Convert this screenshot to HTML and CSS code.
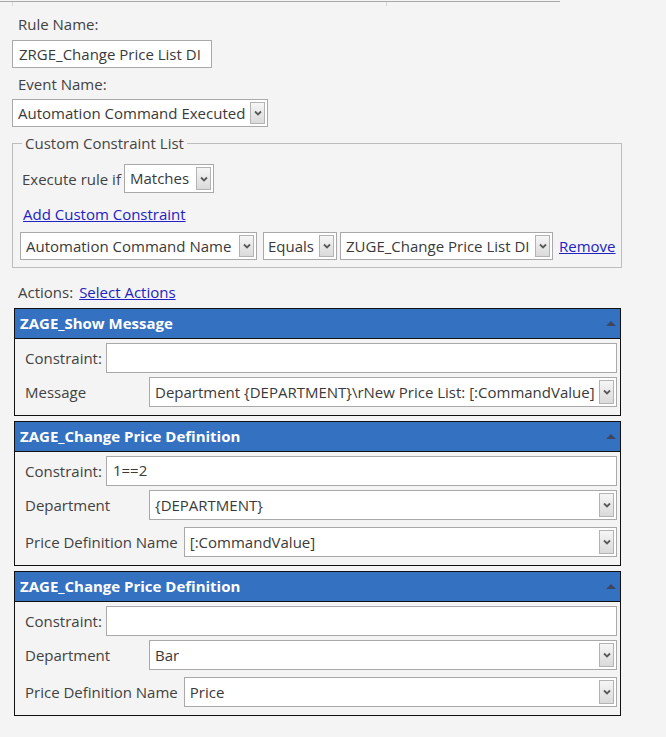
FILE: index.html
```html
<!DOCTYPE html>
<html>
<head>
<meta charset="utf-8">
<link rel="stylesheet" href="styles.css">
</head>
<body>
<div class="topline"><span class="tick t1"></span><span class="tick t2"></span></div>
<div class="form">
  <div class="label lbl-rule">Rule Name:</div>
  <div class="input input-rule">ZRGE_Change Price List DI</div>
  <div class="label lbl-event">Event Name:</div>
  <div class="select select-event"><span class="val">Automation Command Executed</span><span class="arrow"><svg width="8" height="6" viewBox="0 0 8 6"><path d="M1 1.5 L4 4.5 L7 1.5" fill="none" stroke="#5a5a5a" stroke-width="1.8"/></svg></span></div>

  <fieldset class="ccl">
    <legend>Custom Constraint List</legend>
    <div class="exec-row">
      <span class="exec-label">Execute rule if</span>
      <div class="select select-match"><span class="val">Matches</span><span class="arrow"><svg width="8" height="6" viewBox="0 0 8 6"><path d="M1 1.5 L4 4.5 L7 1.5" fill="none" stroke="#5a5a5a" stroke-width="1.8"/></svg></span></div>
    </div>
    <a class="link add-link">Add Custom Constraint</a>
    <div class="cons-row">
      <div class="select sel-name"><span class="val">Automation Command Name</span><span class="arrow"><svg width="8" height="6" viewBox="0 0 8 6"><path d="M1 1.5 L4 4.5 L7 1.5" fill="none" stroke="#5a5a5a" stroke-width="1.8"/></svg></span></div>
      <div class="select sel-op"><span class="val">Equals</span><span class="arrow"><svg width="8" height="6" viewBox="0 0 8 6"><path d="M1 1.5 L4 4.5 L7 1.5" fill="none" stroke="#5a5a5a" stroke-width="1.8"/></svg></span></div>
      <div class="select sel-value"><span class="val">ZUGE_Change Price List DI</span><span class="arrow"><svg width="8" height="6" viewBox="0 0 8 6"><path d="M1 1.5 L4 4.5 L7 1.5" fill="none" stroke="#5a5a5a" stroke-width="1.8"/></svg></span></div>
      <a class="link remove-link">Remove</a>
    </div>
  </fieldset>

  <div class="actions-line"><span class="label-inline">Actions:</span><a class="link">Select Actions</a></div>

  <div class="panel">
    <div class="panel-head"><span>ZAGE_Show Message</span><span class="tri"></span></div>
    <div class="panel-body">
      <div class="row"><span class="plabel short">Constraint:</span><div class="input pinput"></div></div>
      <div class="row"><span class="plabel">Message</span><div class="select psel"><span class="val">Department {DEPARTMENT}\rNew Price List: [:CommandValue]</span><span class="arrow"><svg width="8" height="6" viewBox="0 0 8 6"><path d="M1 1.5 L4 4.5 L7 1.5" fill="none" stroke="#5a5a5a" stroke-width="1.8"/></svg></span></div></div>
    </div>
  </div>

  <div class="panel">
    <div class="panel-head"><span>ZAGE_Change Price Definition</span><span class="tri"></span></div>
    <div class="panel-body">
      <div class="row"><span class="plabel short">Constraint:</span><div class="input pinput">1==2</div></div>
      <div class="row"><span class="plabel">Department</span><div class="select psel"><span class="val">{DEPARTMENT}</span><span class="arrow"><svg width="8" height="6" viewBox="0 0 8 6"><path d="M1 1.5 L4 4.5 L7 1.5" fill="none" stroke="#5a5a5a" stroke-width="1.8"/></svg></span></div></div>
      <div class="row row-gap"><span class="plabel">Price Definition Name</span><div class="select psel"><span class="val">[:CommandValue]</span><span class="arrow"><svg width="8" height="6" viewBox="0 0 8 6"><path d="M1 1.5 L4 4.5 L7 1.5" fill="none" stroke="#5a5a5a" stroke-width="1.8"/></svg></span></div></div>
    </div>
  </div>

  <div class="panel">
    <div class="panel-head"><span>ZAGE_Change Price Definition</span><span class="tri"></span></div>
    <div class="panel-body">
      <div class="row"><span class="plabel short">Constraint:</span><div class="input pinput"></div></div>
      <div class="row"><span class="plabel">Department</span><div class="select psel"><span class="val">Bar</span><span class="arrow"><svg width="8" height="6" viewBox="0 0 8 6"><path d="M1 1.5 L4 4.5 L7 1.5" fill="none" stroke="#5a5a5a" stroke-width="1.8"/></svg></span></div></div>
      <div class="row row-gap"><span class="plabel">Price Definition Name</span><div class="select psel"><span class="val">Price</span><span class="arrow"><svg width="8" height="6" viewBox="0 0 8 6"><path d="M1 1.5 L4 4.5 L7 1.5" fill="none" stroke="#5a5a5a" stroke-width="1.8"/></svg></span></div></div>
    </div>
  </div>
</div>
</body>
</html>
```

FILE: styles.css
```css
* { box-sizing: border-box; }
html, body { margin: 0; padding: 0; }
body {
  background: #f4f4f4;
  font-family: "Open Sans", "Noto Sans", "Liberation Sans", sans-serif;
  font-size: 15px;
  color: #424242;
  width: 666px;
  height: 737px;
  overflow: hidden;
}
.topline {
  position: relative;
  width: 560px;
  height: 2px;
  border-bottom: 1px solid #a9a9a9;
}
.tick { position: absolute; top: 2px; width: 1px; height: 4px; background: #d8d8d8; }
.t1 { left: 12px; }
.t2 { left: 386px; }
.form { padding: 0 0 0 12px; }
.label { height: 20px; line-height: 20px; padding-left: 6px; }
.lbl-rule { margin-top: 12px; }
.lbl-event { margin-top: 6px; }
.input {
  background: #fff;
  border: 1px solid #a9a9a9;
  height: 28px;
  line-height: 26px;
  padding: 0 6px;
  color: #3a3a3a;
  white-space: nowrap;
  overflow: hidden;
}
.input-rule { width: 200px; margin-top: 6px; }
.select {
  display: flex;
  align-items: stretch;
  background: #fff;
  border: 1px solid #a9a9a9;
  height: 28px;
  padding: 2px 2px 2px 5px;
  color: #3a3a3a;
  white-space: nowrap;
}
.select .val { flex: 1; line-height: 22px; overflow: hidden; }
.select .arrow {
  width: 15px;
  margin-left: 4px;
  border: 1px solid #b3b3b3;
  background: linear-gradient(#f6f6f6, #dadada);
  display: flex;
  align-items: center;
  justify-content: center;
  flex: none;
}
.select-event { width: 256px; margin-top: 5px; }
.ccl {
  margin: 6px 0 0 0;
  width: 609px;
  border: 1px solid #bdbdbd;
  padding: 0 5px 7px 7px;
}
.ccl legend {
  margin-left: 2px;
  padding: 0 3px 0 3px;
  line-height: 20px;
  color: #444;
}
.exec-row { display: flex; align-items: center; margin-top: 11px; }
.exec-label { padding-left: 2px; width: 104px; }
.select-match { width: 90px; height: 29px; }
.link {
  color: #2222c2;
  text-decoration: underline;
  cursor: pointer;
}
.add-link { display: block; margin-top: 11px; padding-left: 3px; line-height: 20px; }
.cons-row { display: flex; align-items: center; margin-top: 8px; }
.sel-name { width: 237px; }
.sel-op { width: 74px; margin-left: 6px; padding-left: 4px; }
.sel-op .arrow { margin-left: 2px; }
.sel-value { width: 213px; margin-left: 3px; }
.remove-link { margin-left: 6px; }
.actions-line { margin-top: 14px; padding-left: 6px; line-height: 20px; }
.label-inline { margin-right: 6px; }
.panel {
  margin: 6px 0 0 2px;
  width: 607px;
  border: 1px solid #111;
  background: #f4f4f4;
}
.panel + .panel { margin-top: 5px; }
.panel-head {
  position: relative;
  height: 30px;
  background: #3571c1;
  border-bottom: 1px solid #111;
  color: #fff;
  font-weight: bold;
  line-height: 29px;
  padding-left: 5px;
}
.tri {
  position: absolute;
  right: 4px;
  top: 12px;
  width: 0;
  height: 0;
  border-left: 5px solid transparent;
  border-right: 5px solid transparent;
  border-bottom: 5px solid #3d4760;
}
.panel-body { padding: 4px 3px 8px 10px; }
.row { display: flex; align-items: center; height: 30px; }
.row + .row { margin-top: 4px; }
.row.row-gap { margin-top: 7px; }
.plabel { min-width: 124px; padding-right: 6px; white-space: nowrap; }
.plabel.short { min-width: 0; padding-right: 4px; }
.pinput { flex: 1; height: 30px; }
.psel { flex: 1; height: 30px; padding-left: 5px; }
.psel .val { line-height: 24px; }
```
